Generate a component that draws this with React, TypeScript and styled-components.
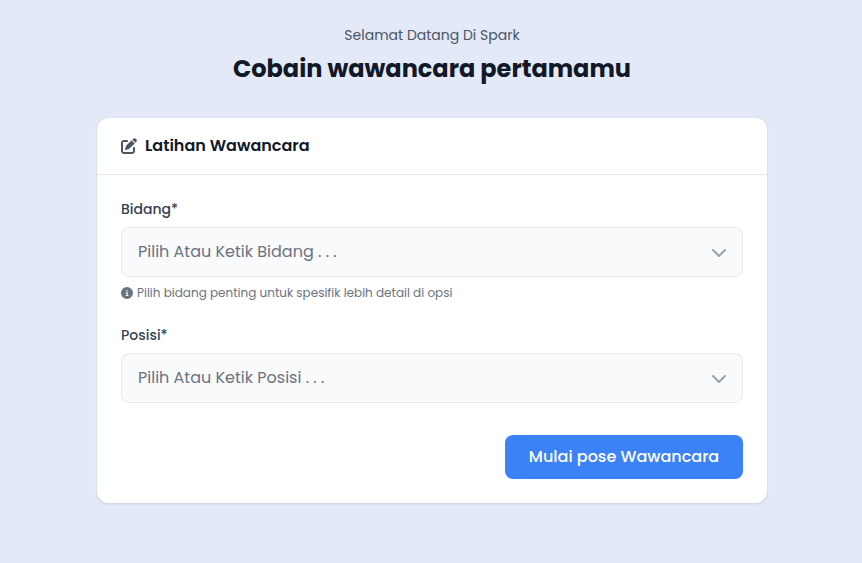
import React from "react";
import styled, { createGlobalStyle } from "styled-components";
import { FaChevronDown, FaCircleInfo, FaPenToSquare } from "react-icons/fa6";

const GlobalStyle = createGlobalStyle`
  *, *::before, *::after { box-sizing: border-box; }
  body {
    margin: 0;
    background: #e3e9f6;
    font-family: Poppins, Inter, sans-serif;
  }
`;

const Page = styled.main`
  min-height: 100vh;
  padding: 25px 95px 60px 97px;
`;

const Intro = styled.header`
  display: flex;
  flex-direction: column;
  align-items: center;
  gap: 8px;
  margin-bottom: 33px;
`;

const Welcome = styled.p`
  margin: 0;
  font-size: 14px;
  line-height: 20px;
  color: #4b5563;
`;

const Heading = styled.h1`
  margin: 0;
  font-size: 24px;
  font-weight: 700;
  line-height: 32px;
  color: #111827;
`;

const Card = styled.section`
  background: #fff;
  border-radius: 12px;
  box-shadow: 0 1px 3px rgba(0, 0, 0, 0.08), 0 1px 2px rgba(0, 0, 0, 0.03);
`;

const CardHeader = styled.div`
  display: flex;
  align-items: center;
  gap: 8px;
  height: 57px;
  padding: 0 24px;
  border-bottom: 1px solid #e5e7eb;
  color: #4b5563;
`;

const CardTitle = styled.h2`
  margin: 0;
  font-size: 16px;
  font-weight: 600;
  line-height: 24px;
  color: #111827;
`;

const Form = styled.form`
  display: flex;
  flex-direction: column;
  padding: 24px;
`;

const Field = styled.div<{ $gap: number }>`
  display: flex;
  flex-direction: column;
  gap: 8px;
  margin-bottom: ${(p) => p.$gap}px;
`;

const Label = styled.label`
  font-size: 14px;
  font-weight: 500;
  line-height: 20px;
  color: #374151;
`;

const Select = styled.div`
  display: flex;
  align-items: center;
  justify-content: space-between;
  height: 50px;
  padding: 0 15px 0 16px;
  border: 1px solid #e5e7eb;
  border-radius: 8px;
  background: #f9fafb;
  font-size: 16px;
  line-height: 24px;
  color: #6b7280;
`;

const Chevron = styled(FaChevronDown)`
  color: #9ca3af;
  width: 16px;
  height: 16px;
`;

const Hint = styled.div`
  display: flex;
  align-items: center;
  gap: 4px;
  font-size: 12px;
  line-height: 16px;
  color: #6b7280;
`;

const Submit = styled.button`
  align-self: flex-end;
  width: 238px;
  height: 44px;
  padding: 0;
  border: 0;
  border-radius: 8px;
  background: #3b82f6;
  color: #fff;
  font: inherit;
  font-size: 16px;
  font-weight: 500;
  line-height: 24px;
`;

export default function App() {
  return (
    <Page>
      <GlobalStyle />
      <Intro>
        <Welcome>Selamat Datang Di Spark</Welcome>
        <Heading>Cobain wawancara pertamamu</Heading>
      </Intro>
      <Card>
        <CardHeader>
          <FaPenToSquare size={16} />
          <CardTitle>Latihan Wawancara</CardTitle>
        </CardHeader>
        <Form onSubmit={(e) => e.preventDefault()}>
          <Field $gap={24}>
            <Label>Bidang*</Label>
            <Select>
              <span>Pilih Atau Ketik Bidang . . .</span>
              <Chevron />
            </Select>
            <Hint>
              <FaCircleInfo size={12} />
              <span>Pilih bidang penting untuk spesifik lebih detail di opsi</span>
            </Hint>
          </Field>
          <Field $gap={32}>
            <Label>Posisi*</Label>
            <Select>
              <span>Pilih Atau Ketik Posisi . . .</span>
              <Chevron />
            </Select>
          </Field>
          <Submit type="submit">Mulai pose Wawancara</Submit>
        </Form>
      </Card>
    </Page>
  );
}
